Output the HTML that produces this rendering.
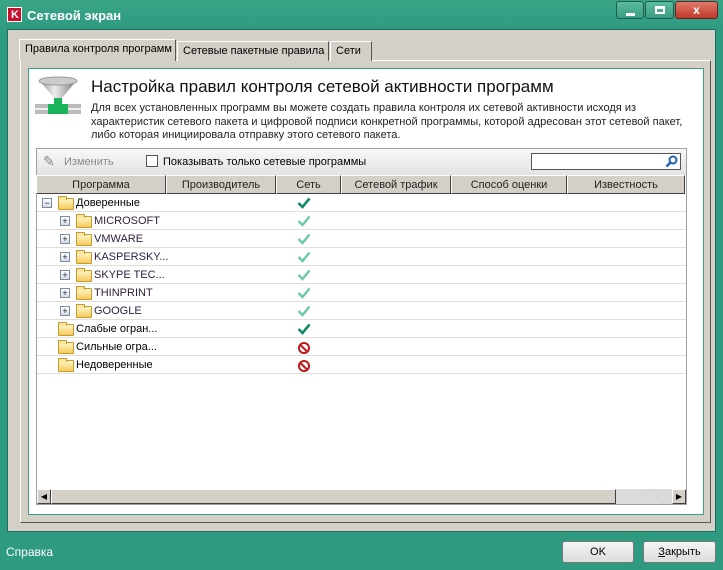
<!DOCTYPE html>
<html><head><meta charset="utf-8"><style>
*{box-sizing:border-box;margin:0;padding:0}
body{width:723px;height:570px;overflow:hidden;background:#2e9a80;font-family:"Liberation Sans","DejaVu Sans",sans-serif;font-size:11px;color:#000;position:relative}
.abs{position:absolute}
.title{left:0;top:0;width:723px;height:30px;background:linear-gradient(#3aa586,#2e9a80)}
.client{left:7px;top:29px;width:709px;height:503px;background:#d4d0c8;border:1px solid #1d6f5b}
.tab{top:41px;height:20px;border:1px solid #8a8a8a;border-bottom:none;background:#d4d0c8;padding:3px 5px 0;font-size:11px;white-space:nowrap}
.panel{left:20px;top:60px;width:691px;height:463px;border:1px solid #fff;border-right-color:#555;border-bottom-color:#555;background:#d4d0c8}
.inner{left:28px;top:68px;width:676px;height:447px;background:#fff;border:1px solid #3a9f86}
.list{left:36px;top:148px;width:651px;height:357px;border:1px solid #a0a0a0;background:#fff}
.hdr{top:175px;height:19px;background:#d4d0c8;border:1px solid;border-color:#fff #404040 #404040 #fff;text-align:center;padding-top:3px;font-size:11px;color:#222}
.row{left:37px;width:649px;height:18px;border-bottom:1px solid #e2dfd8}
.row span{position:absolute;top:3px;font-size:11px}
.pm{position:absolute;top:4px;width:10px;height:10px;border:1px solid #7a8aa0;background:linear-gradient(#fff,#d8dce4);font-size:9px;line-height:8px;text-align:center;color:#123}
.fold{position:absolute;top:4px;width:16px;height:12px;border:1px solid #c99a2e;border-radius:1px;background:linear-gradient(#fff5c8,#f3cc5a)}
.fold:before{content:"";position:absolute;left:-1px;top:-3px;width:7px;height:3px;border:1px solid #c99a2e;border-bottom:none;background:#fbe6a0}
.chk{position:absolute;left:260px;top:3px}
.no{position:absolute;left:261px;top:4px;width:12px;height:12px;border:2px solid #c01818;border-radius:50%}
.no:after{content:"";position:absolute;left:3px;top:-1px;width:2px;height:11px;background:#c01818;transform:rotate(-45deg)}
.btn{top:541px;height:22px;border:1px solid #7a7a7a;border-radius:3px;background:linear-gradient(#f6f6f6,#dcdcdc);text-align:center;padding-top:4px;font-size:11px}
</style></head><body>
<div class="abs title"></div>
<div class="abs" style="left:7px;top:7px;width:15px;height:15px;background:#fff"><div style="position:absolute;left:1px;top:1px;width:13px;height:13px;background:#c8102e"></div><div style="position:absolute;left:4px;top:2px;color:#fff;font-weight:bold;font-size:11px">K</div></div>
<div class="abs" style="left:27px;top:8px;color:#fff;font-size:13px;font-weight:bold">Сетевой экран</div>
<div class="abs" style="left:616px;top:1px;width:28px;height:18px;border:1px solid #1b5f4f;border-radius:3px;background:linear-gradient(#5cbba0,#3a9c82)"><div style="position:absolute;left:9px;top:11px;width:9px;height:3px;background:#fff"></div></div>
<div class="abs" style="left:645px;top:1px;width:29px;height:18px;border:1px solid #1b5f4f;border-radius:3px;background:linear-gradient(#5cbba0,#3a9c82)"><div style="position:absolute;left:9px;top:4px;width:10px;height:8px;border:2px solid #fff;border-top-width:3px"></div></div>
<div class="abs" style="left:675px;top:1px;width:43px;height:18px;border:1px solid #6a2020;border-radius:3px;background:linear-gradient(#e07a6a,#c0392b);color:#fff;font-weight:bold;text-align:center;font-size:12px;line-height:16px">x</div>
<div class="abs client"></div>
<div class="abs panel"></div>
<div class="abs tab" style="left:19px;top:39px;height:22px;width:157px;border-color:#fff #555 #555 #fff;z-index:2">Правила контроля программ</div>
<div class="abs tab" style="left:177px;width:152px;border-color:#fff #555 #555 #fff">Сетевые пакетные правила</div>
<div class="abs tab" style="left:330px;width:42px;border-color:#fff #555 #555 #fff">Сети</div>
<div class="abs inner"></div>
<svg class="abs" style="left:35px;top:74px" width="48" height="46"><defs><linearGradient id="g" x1="0" x2="1"><stop offset="0" stop-color="#888"/><stop offset=".4" stop-color="#eee"/><stop offset="1" stop-color="#777"/></linearGradient></defs><path d="M4 6 H42 L27 24 V30 H19 V24 Z" fill="url(#g)"/><ellipse cx="23" cy="7" rx="19" ry="4" fill="#ccc" stroke="#999"/><rect x="0" y="30" width="46" height="10" fill="#bbb"/><rect x="0" y="34" width="46" height="2" fill="#eee"/><rect x="13" y="30" width="20" height="10" fill="#19b35a"/><rect x="19" y="24" width="8" height="7" fill="#19b35a"/></svg>
<div class="abs" style="left:91px;top:77px;font-size:17px;color:#111">Настройка правил контроля сетевой активности программ</div>
<div class="abs" style="left:91px;top:102px;font-size:11px;line-height:13.5px;color:#222;width:600px">Для всех установленных программ вы можете создать правила контроля их сетевой активности исходя из характеристик сетевого пакета и цифровой подписи конкретной программы, которой адресован этот сетевой пакет, либо которая инициировала отправку этого сетевого пакета.</div>
<div class="abs list"></div>
<div class="abs" style="left:37px;top:149px;width:649px;height:26px;background:linear-gradient(#f8f8f8,#e2e2e2)"></div>
<div class="abs" style="left:43px;top:153px;color:#888;font-size:14px">✎</div>
<div class="abs" style="left:64px;top:156px;color:#888">Изменить</div>
<div class="abs" style="left:146px;top:155px;width:12px;height:12px;border:1px solid #555;background:#fff"></div>
<div class="abs" style="left:163px;top:156px">Показывать только сетевые программы</div>
<div class="abs" style="left:531px;top:153px;width:150px;height:17px;border:1px solid #555;background:#fff"></div>
<svg class="abs" style="left:665px;top:155px" width="13" height="13"><circle cx="8" cy="5" r="3.5" fill="none" stroke="#1f5fb0" stroke-width="2"/><path d="M5.5 7.5 L1.5 11.5" stroke="#1f5fb0" stroke-width="2.5"/></svg>
<div class="abs hdr" style="left:36px;width:130px">Программа</div>
<div class="abs hdr" style="left:166px;width:110px">Производитель</div>
<div class="abs hdr" style="left:276px;width:65px">Сеть</div>
<div class="abs hdr" style="left:341px;width:110px">Сетевой трафик</div>
<div class="abs hdr" style="left:451px;width:116px">Способ оценки</div>
<div class="abs hdr" style="left:567px;width:118px">Известность</div>

<div class="abs row" style="top:194px"><div class="pm" style="left:5px">−</div><div class="fold" style="left:21px"></div><span style="left:39px">Доверенные</span><svg class="chk" width="14" height="12"><path d="M1.5 6 L5.5 10 L12.5 1.5" fill="none" stroke="#0f8a6a" stroke-width="2.6"/></svg></div>
<div class="abs row" style="top:212px"><div class="pm" style="left:23px">+</div><div class="fold" style="left:39px"></div><span style="left:57px;color:#302040">MICROSOFT</span><svg class="chk" width="14" height="12"><path d="M1.5 6 L5.5 10 L12.5 1.5" fill="none" stroke="#6ac8ac" stroke-width="2.4"/></svg></div>
<div class="abs row" style="top:230px"><div class="pm" style="left:23px">+</div><div class="fold" style="left:39px"></div><span style="left:57px;color:#302040">VMWARE</span><svg class="chk" width="14" height="12"><path d="M1.5 6 L5.5 10 L12.5 1.5" fill="none" stroke="#6ac8ac" stroke-width="2.4"/></svg></div>
<div class="abs row" style="top:248px"><div class="pm" style="left:23px">+</div><div class="fold" style="left:39px"></div><span style="left:57px;color:#302040">KASPERSKY...</span><svg class="chk" width="14" height="12"><path d="M1.5 6 L5.5 10 L12.5 1.5" fill="none" stroke="#6ac8ac" stroke-width="2.4"/></svg></div>
<div class="abs row" style="top:266px"><div class="pm" style="left:23px">+</div><div class="fold" style="left:39px"></div><span style="left:57px;color:#302040">SKYPE TEC...</span><svg class="chk" width="14" height="12"><path d="M1.5 6 L5.5 10 L12.5 1.5" fill="none" stroke="#6ac8ac" stroke-width="2.4"/></svg></div>
<div class="abs row" style="top:284px"><div class="pm" style="left:23px">+</div><div class="fold" style="left:39px"></div><span style="left:57px;color:#302040">THINPRINT</span><svg class="chk" width="14" height="12"><path d="M1.5 6 L5.5 10 L12.5 1.5" fill="none" stroke="#6ac8ac" stroke-width="2.4"/></svg></div>
<div class="abs row" style="top:302px"><div class="pm" style="left:23px">+</div><div class="fold" style="left:39px"></div><span style="left:57px;color:#302040">GOOGLE</span><svg class="chk" width="14" height="12"><path d="M1.5 6 L5.5 10 L12.5 1.5" fill="none" stroke="#6ac8ac" stroke-width="2.4"/></svg></div>
<div class="abs row" style="top:320px"><div class="fold" style="left:21px"></div><span style="left:39px">Слабые огран...</span><svg class="chk" width="14" height="12"><path d="M1.5 6 L5.5 10 L12.5 1.5" fill="none" stroke="#0f8a6a" stroke-width="2.6"/></svg></div>
<div class="abs row" style="top:338px"><div class="fold" style="left:21px"></div><span style="left:39px">Сильные огра...</span><div class="no"></div></div>
<div class="abs row" style="top:356px"><div class="fold" style="left:21px"></div><span style="left:39px">Недоверенные</span><div class="no"></div></div>

<div class="abs" style="left:37px;top:489px;width:649px;height:15px;background:#d4d0c8"></div>
<div class="abs" style="left:37px;top:489px;width:14px;height:15px;border:1px solid;border-color:#fff #404040 #404040 #fff;font-size:8px;text-align:center;line-height:13px">◀</div>
<div class="abs" style="left:51px;top:489px;width:565px;height:15px;border:1px solid;border-color:#fff #404040 #404040 #fff;background:#d4d0c8"></div>
<div class="abs" style="left:616px;top:489px;width:56px;height:15px;background:repeating-linear-gradient(45deg,#e6e6e6 0 1px,#cfcfcf 1px 2px)"></div>
<div class="abs" style="left:672px;top:489px;width:14px;height:15px;border:1px solid;border-color:#fff #404040 #404040 #fff;font-size:8px;text-align:center;line-height:13px">▶</div>

<div class="abs" style="left:6px;top:545px;color:#fff;font-size:12px">Справка</div>
<div class="abs btn" style="left:562px;width:72px">OK</div>
<div class="abs btn" style="left:643px;width:73px"><u>З</u>акрыть</div>
</body></html>
